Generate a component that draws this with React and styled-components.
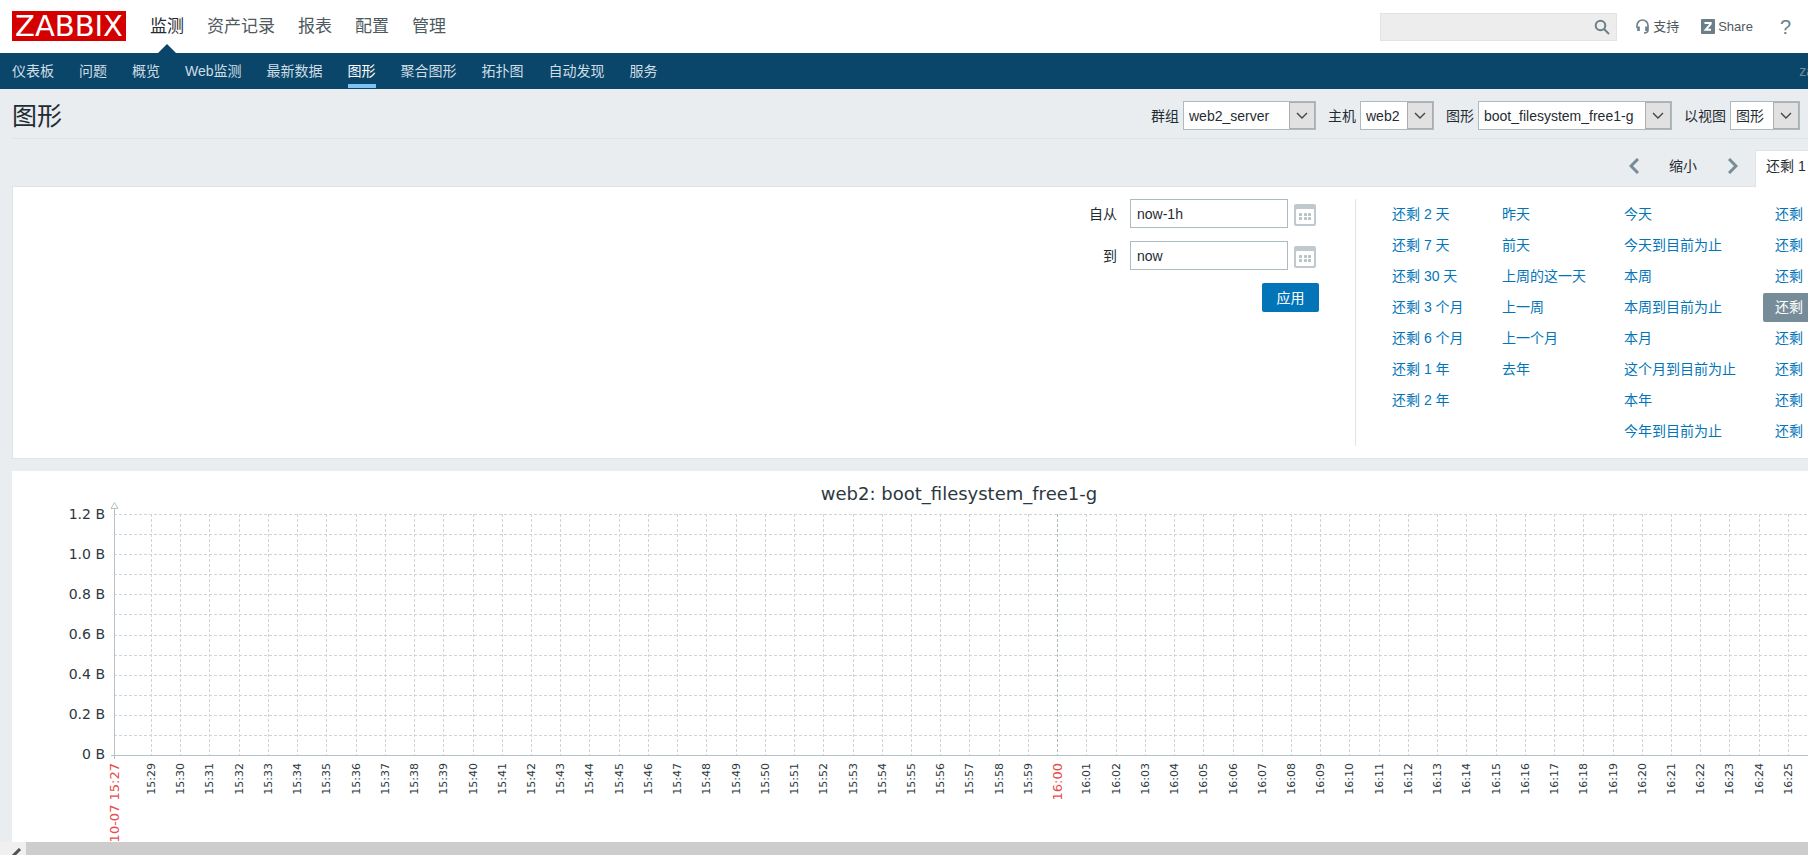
import React from 'react'
import styled, { createGlobalStyle, css } from 'styled-components'

const GlobalStyle = createGlobalStyle`
    * {
        box-sizing: border-box;
    }

    body {
        margin: 0;
        background-color: #e9edf0;
        color: #1f2c33;
        font-family: 'Liberation Sans', 'Noto Sans CJK SC', sans-serif;
        font-size: 14px;
        line-height: 20px;
    }

    a {
        text-decoration: none;
    }

    input, select, button {
        font: inherit;
        color: inherit;
    }
`

const Page = styled.div`
    height: 100vh;
    display: flex;
    flex-direction: column;
    overflow: hidden;
`

const Header = styled.header`
    flex: none;
    height: 53px;
    padding: 0 17px 0 12px;
    background-color: #fff;
    display: flex;
    align-items: center;
    justify-content: space-between;
`

const HeaderSide = styled.div`
    display: flex;
    align-items: center;
    height: 100%;
`

const Logo = styled.a`
    width: 114px;
    height: 30px;
    margin: 0 24px 2px 0;
    background-color: #d40000;
    color: #fff;
    font-family: 'DejaVu Sans', sans-serif;
    font-size: 29px;
    line-height: 30px;
    text-align: center;
`

const MainNav = styled.nav`
    display: flex;
    gap: 23px;
    height: 100%;
`

const MainNavLink = styled.a`
    position: relative;
    color: ${props => (props.$active ? '#1f2c33' : '#4f5a60')};
    font-size: 17px;
    line-height: 53px;

    ${props => props.$active && css`
        &::after {
            content: '';
            position: absolute;
            bottom: 0;
            left: 8px;
            border: 9px solid transparent;
            border-top-width: 0;
            border-bottom-color: #0a466a;
        }
    `}
`

const Search = styled.form`
    display: flex;
    align-items: center;
    width: 237px;
    height: 28px;
    padding-right: 6px;
    margin-right: 19px;
    background-color: #ededed;
    border: 1px solid #e3e3e3;

    & > input {
        flex: 1;
        min-width: 0;
        border: none;
        background: none;
        outline: none;
    }

    & > button {
        display: flex;
        padding: 0;
        border: none;
        background: none;
    }
`

const HeaderLink = styled.a`
    display: flex;
    align-items: center;
    gap: ${props => props.$gap || 4}px;
    margin-right: 22px;
    color: #4f5a60;
    font-size: 13px;
`

const HelpLink = styled.a`
    margin-left: 5px;
    color: #6b7f8a;
    font-size: 20px;
`

const SubNav = styled.nav`
    flex: none;
    display: flex;
    gap: 25px;
    height: 36px;
    padding-left: 12px;
    background-color: #0a466a;
`

const SubNavLink = styled.a`
    height: 35px;
    border-bottom: 4px solid ${props => (props.$active ? '#7dc4f4' : 'transparent')};
    color: ${props => (props.$active ? '#fff' : '#cfdde5')};
    line-height: 36px;
    white-space: nowrap;
`

const User = styled.span`
    margin-left: auto;
    margin-right: -6px;
    color: #768d99;
    line-height: 36px;
`

const Main = styled.main`
    flex: 1;
    min-height: 0;
    padding-left: 12px;
    overflow: hidden;
`

const TitleBar = styled.div`
    display: flex;
    align-items: center;
    justify-content: space-between;
    height: 50px;
    padding: 4px 8px 0 0;
    border-bottom: 1px solid #dfe4e7;

    & > h1 {
        margin: 0;
        font-size: 25px;
        font-weight: normal;
        line-height: 44px;
    }
`

const Filters = styled.form`
    display: flex;
    gap: 12px;
`

const Field = styled.label`
    display: flex;
    align-items: center;
    gap: 4px;
`

const SelectBox = styled.span`
    position: relative;
    display: flex;
    width: ${props => props.$width}px;
    height: 29px;
    background-color: #fff;
    border: 1px solid #acbbc2;

    & > select {
        flex: 1;
        min-width: 0;
        padding: 0 26px 0 5px;
        appearance: none;
        border: none;
        background: none;
        outline: none;
    }

    & > span {
        position: absolute;
        top: 0;
        right: 0;
        bottom: 0;
        width: 26px;
        display: flex;
        align-items: center;
        justify-content: center;
        background-color: #e1e1e1;
        border: 1px solid #adadad;
        pointer-events: none;
    }
`

const TimeBar = styled.div`
    display: flex;
    align-items: center;
    justify-content: flex-end;
    height: 36px;
    margin-top: 11px;
`

const TimeButton = styled.button`
    display: flex;
    align-items: center;
    padding: 0;
    margin: 0 ${props => props.$space}px 4px 0;
    border: none;
    background: none;
`

const TimeTab = styled.a`
    position: relative;
    align-self: stretch;
    width: 53px;
    margin-bottom: -1px;
    padding-left: 10px;
    background-color: #fff;
    border: 1px solid #dfe4e7;
    border-width: 1px 0 0 1px;
    border-radius: 2px 0 0 0;
    color: #1f2c33;
    line-height: 31px;
    white-space: nowrap;
`

const TimePanel = styled.section`
    display: flex;
    justify-content: flex-end;
    padding: 12px 0;
    background-color: #fff;
    border: 1px solid #dfe4e7;
    border-right: none;
`

const RangeForm = styled.form`
    display: flex;
    flex-direction: column;
    align-items: flex-end;
    gap: 13px;
    padding-right: 36px;
`

const RangeRow = styled.div`
    display: flex;
    align-items: center;
    margin-right: 3px;

    & > label {
        margin-right: 13px;
    }

    & > input {
        width: 158px;
        height: 29px;
        padding: 0 6px;
        border: 1px solid #acbbc2;
        outline: none;
    }

    & > button {
        display: flex;
        padding: 3px 0 0;
        margin-left: 6px;
        border: none;
        background: none;
    }
`

const ApplyButton = styled.button`
    width: 57px;
    height: 29px;
    padding: 0;
    border: none;
    border-radius: 2px;
    background-color: #0275b8;
    color: #fff;
`

const Ranges = styled.div`
    display: grid;
    grid-template-columns: 110px 122px 151px 45px;
    padding: 1px 0 0 24px;
    border-left: 1px solid #dfe4e7;
`

const RangeColumn = styled.div`
    display: flex;
    flex-direction: column;
    gap: 2px;
`

const RangeLink = styled.a`
    height: 29px;
    padding-left: 12px;
    border-radius: 2px 0 0 2px;
    background-color: ${props => (props.$active ? '#768d99' : 'transparent')};
    color: ${props => (props.$active ? '#fff' : '#0275b8')};
    line-height: 29px;
    white-space: nowrap;
`

const GraphPanel = styled.section`
    height: 400px;
    margin-top: 12px;
    background-color: #fff;
`

const Graph = styled.svg`
    display: block;
    width: 100%;
    height: 100%;
    font-family: 'DejaVu Sans', sans-serif;
    fill: #2c383e;

    & .title {
        font-size: 18px;
        text-anchor: middle;
    }

    & .value {
        font-size: 14px;
        text-anchor: end;
    }

    & .time {
        font-size: 11px;
        text-anchor: end;
    }

    & .mark {
        font-size: 13px;
        text-anchor: end;
        fill: #e84b48;
    }
`

const ScrollBar = styled.div`
    flex: none;
    height: 13px;
    background-color: #cdcdcd;
    overflow: hidden;

    & > button {
        display: block;
        width: 26px;
        height: 26px;
        padding: 6px 0 0 7px;
        border: none;
        background-color: #f0f0f0;
    }
`

const sections = ['监测', '资产记录', '报表', '配置', '管理']
const pages = ['仪表板', '问题', '概览', 'Web监测', '最新数据', '图形', '聚合图形', '拓扑图', '自动发现', '服务']

const filters = [
    { label: '群组', value: 'web2_server', width: 133 },
    { label: '主机', value: 'web2', width: 74 },
    { label: '图形', value: 'boot_filesystem_free1-g', width: 194 },
    { label: '以视图', value: '图形', width: 70 },
]

const ranges = [
    ['还剩 2 天', '还剩 7 天', '还剩 30 天', '还剩 3 个月', '还剩 6 个月', '还剩 1 年', '还剩 2 年'],
    ['昨天', '前天', '上周的这一天', '上一周', '上一个月', '去年'],
    ['今天', '今天到目前为止', '本周', '本周到目前为止', '本月', '这个月到目前为止', '本年', '今年到目前为止'],
    ['还剩', '还剩', '还剩', '还剩', '还剩', '还剩', '还剩', '还剩'],
]

// chart geometry, relative to the graph panel
const LEFT = 102
const TOP = 43
const BOTTOM = 284
const FIRST_TICK = 139
const MINUTE = 29.23

const values = ['1.2 B', '1.0 B', '0.8 B', '0.6 B', '0.4 B', '0.2 B', '0 B']
const rows = Array.from({ length: 12 }, (_, i) => Math.round(TOP + (i * (BOTTOM - TOP)) / 12))
const ticks = Array.from({ length: 57 }, (_, i) => {
    const minute = 29 + i
    return {
        x: Math.round(FIRST_TICK + i * MINUTE),
        label: minute < 60 ? `15:${minute}` : `16:${String(minute - 60).padStart(2, '0')}`,
    }
})

function Select({ label, value, width }) {
    return (
        <Field>
            {label}
            <SelectBox $width={width}>
                <select defaultValue={value}>
                    <option>{value}</option>
                </select>
                <span>
                    <svg width="12" height="8" viewBox="0 0 12 8" fill="none" stroke="#444" strokeWidth="1.4">
                        <path d="M1 1l5 5 5-5" />
                    </svg>
                </span>
            </SelectBox>
        </Field>
    )
}

function CalendarIcon() {
    return (
        <svg width="22" height="22" viewBox="0 0 22 22">
            <rect width="22" height="22" rx="2" fill="#c0cace" />
            <rect x="2" y="5" width="18" height="15" rx="1" fill="#fff" />
            <g fill="#b9c4c9">
                {[9, 13].map(y => [5, 10, 14].map(x => (
                    <rect key={`${x}-${y}`} x={x} y={y} width="3" height="3" rx="0.5" />
                )))}
            </g>
        </svg>
    )
}

function RangeInput({ id, label, value }) {
    return (
        <RangeRow>
            <label htmlFor={id}>{label}</label>
            <input id={id} type="text" defaultValue={value} />
            <button type="button" aria-label={label}><CalendarIcon /></button>
        </RangeRow>
    )
}

function Chart() {
    return (
        <Graph>
            <text className="title" x="947" y="29">web2: boot_filesystem_free1-g</text>

            <g stroke="#ccd6da" strokeDasharray="3 2">
                {rows.map(y => (
                    <line key={y} x1={LEFT} x2="100%" y1={y + 0.5} y2={y + 0.5} />
                ))}
                {ticks.map(({ x, label }) => (
                    <line
                        key={label}
                        x1={x + 0.5}
                        x2={x + 0.5}
                        y1={TOP}
                        y2={BOTTOM}
                        stroke={label === '16:00' ? '#acbbc2' : undefined}
                    />
                ))}
            </g>

            <g stroke="#b5c3c9">
                <line x1={LEFT - 3} x2="100%" y1={BOTTOM + 0.5} y2={BOTTOM + 0.5} />
                <line x1={LEFT + 0.5} x2={LEFT + 0.5} y1={TOP - 6} y2={BOTTOM + 4} />
                <path d={`M${LEFT - 3} ${TOP - 5.5}h7l-3.5-6z`} fill="#fff" />
            </g>

            {values.map((value, i) => (
                <text key={value} className="value" x="93" y={48 + i * 40}>{value}</text>
            ))}

            <text className="mark" transform={`translate(${LEFT + 5} 292) rotate(-90)`}>10-07 15:27</text>
            {ticks.map(({ x, label }) => (
                <text
                    key={label}
                    className={label === '16:00' ? 'mark' : 'time'}
                    transform={`translate(${x + (label === '16:00' ? 5 : 4)} 292) rotate(-90)`}
                >
                    {label}
                </text>
            ))}
        </Graph>
    )
}

function App() {
    return (
        <Page>
            <GlobalStyle />
            <Header>
                <HeaderSide>
                    <Logo href="#">ZABBIX</Logo>
                    <MainNav>
                        {sections.map(name => (
                            <MainNavLink key={name} href="#" $active={name === '监测'}>{name}</MainNavLink>
                        ))}
                    </MainNav>
                </HeaderSide>
                <HeaderSide>
                    <Search>
                        <input type="text" aria-label="搜索" />
                        <button type="button" aria-label="搜索">
                            <svg width="16" height="16" viewBox="0 0 16 16" fill="none" stroke="#6b7f8a" strokeWidth="2">
                                <circle cx="6.5" cy="6.5" r="4.8" />
                                <path d="M10 10l5 5" />
                            </svg>
                        </button>
                    </Search>
                    <HeaderLink href="#">
                        <svg width="13" height="15" viewBox="0 0 13 15" fill="none" stroke="#6b7f8a">
                            <path d="M1 9V6.500a5.500 5.500 0 0 1 11 0v4.500q0 3-4 3" strokeWidth="1.600" />
                            <path d="M2.500 7.500v4.500M10.500 7.500v4.500" strokeWidth="2.600" />
                        </svg>
                        支持
                    </HeaderLink>
                    <HeaderLink href="#" $gap={3}>
                        <svg width="14" height="15" viewBox="0 0 14 15">
                            <rect width="14" height="15" rx="1" fill="#6b7f8a" />
                            <path d="M3.500 4h6.200v.800l-5 5.900h5.300" fill="none" stroke="#fff" strokeWidth="2" />
                        </svg>
                        Share
                    </HeaderLink>
                    <HelpLink href="#">?</HelpLink>
                </HeaderSide>
            </Header>

            <SubNav>
                {pages.map(name => (
                    <SubNavLink key={name} href="#" $active={name === '图形'}>{name}</SubNavLink>
                ))}
                <User>za</User>
            </SubNav>

            <Main>
                <TitleBar>
                    <h1>图形</h1>
                    <Filters>
                        {filters.map(filter => <Select key={filter.label} {...filter} />)}
                    </Filters>
                </TitleBar>

                <TimeBar>
                    <TimeButton $space={30} aria-label="后退">
                        <svg width="10" height="16" viewBox="0 0 10 16" fill="none" stroke="#768d99" strokeWidth="3">
                            <path d="M9 1L2 8l7 7" />
                        </svg>
                    </TimeButton>
                    <TimeButton $space={31}>缩小</TimeButton>
                    <TimeButton $space={17} aria-label="前进">
                        <svg width="10" height="16" viewBox="0 0 10 16" fill="none" stroke="#768d99" strokeWidth="3">
                            <path d="M1 1l7 7-7 7" />
                        </svg>
                    </TimeButton>
                    <TimeTab href="#">还剩 1</TimeTab>
                </TimeBar>

                <TimePanel>
                    <RangeForm>
                        <RangeInput id="from" label="自从" value="now-1h" />
                        <RangeInput id="to" label="到" value="now" />
                        <ApplyButton type="button">应用</ApplyButton>
                    </RangeForm>
                    <Ranges>
                        {ranges.map((column, i) => (
                            <RangeColumn key={i}>
                                {column.map((name, j) => (
                                    <RangeLink key={j} href="#" $active={i === 3 && j === 3}>{name}</RangeLink>
                                ))}
                            </RangeColumn>
                        ))}
                    </Ranges>
                </TimePanel>

                <GraphPanel>
                    <Chart />
                </GraphPanel>
            </Main>

            <ScrollBar>
                <button type="button" aria-label="向左滚动">
                    <svg width="12" height="16" viewBox="0 0 12 16" fill="none" stroke="#505050" strokeWidth="3">
                        <path d="M9 1L2 8l7 7" />
                    </svg>
                </button>
            </ScrollBar>
        </Page>
    )
}

export default App
